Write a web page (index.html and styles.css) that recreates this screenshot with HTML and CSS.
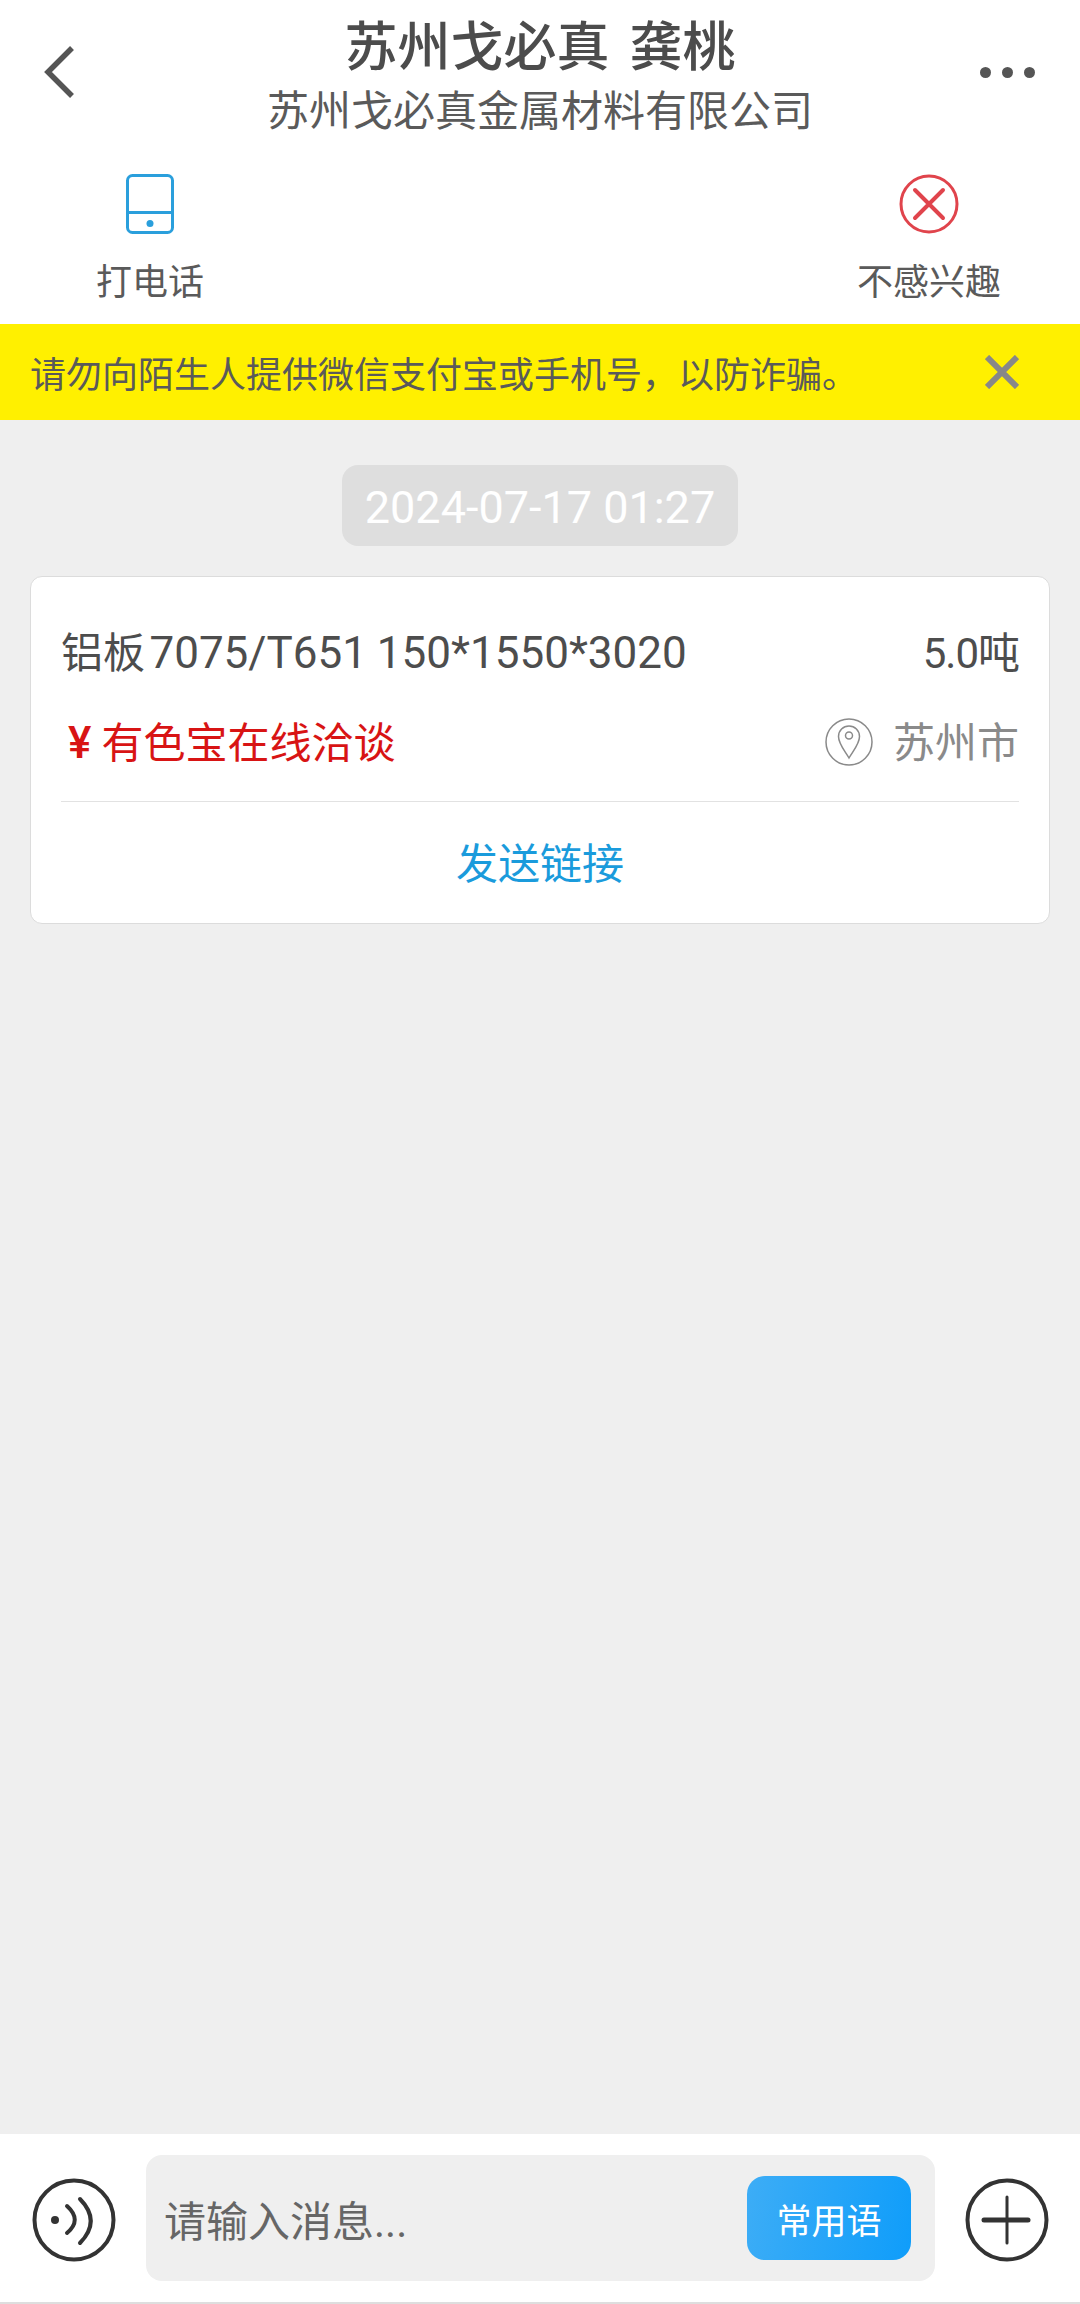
FILE: index.html
```html
<!DOCTYPE html>
<html lang="zh-CN">
<head>
<meta charset="utf-8">
<title>苏州戈必真 龚桃</title>
<link rel="stylesheet" href="styles.css">
</head>
<body>
<div class="page">
  <header class="topbar">
    <svg class="back" viewBox="0 0 36 56" width="36" height="56"><path d="M31 4 L7 28 L31 52" fill="none" stroke="#555" stroke-width="5.500"/></svg>
    <div class="heading">
      <div class="title">苏州戈必真 龚桃</div>
      <div class="subtitle">苏州戈必真金属材料有限公司</div>
    </div>
    <div class="more"><i></i><i></i><i></i></div>
  </header>
  <nav class="actions">
    <div class="action call">
      <svg viewBox="0 0 60 60" width="60" height="60"><rect x="7.500" y="1.500" width="45" height="57" rx="5" fill="none" stroke="#2a9fdc" stroke-width="3"/><path d="M7.500 38.500H52.500" stroke="#2a9fdc" stroke-width="3"/><circle cx="30" cy="49.500" r="3.500" fill="#2a9fdc"/></svg>
      <span>打电话</span>
    </div>
    <div class="action reject">
      <svg viewBox="0 0 60 60" width="60" height="60"><circle cx="30" cy="30" r="28" fill="none" stroke="#e0444c" stroke-width="3"/><path d="M16 16 L44 44 M44 16 L16 44" stroke="#e0444c" stroke-width="4" stroke-linecap="round"/></svg>
      <span>不感兴趣</span>
    </div>
  </nav>
  <div class="notice">
    <span>请勿向陌生人提供微信支付宝或手机号，以防诈骗。</span>
    <svg viewBox="0 0 34 34" width="34" height="34"><path d="M2 2 L32 32 M32 2 L2 32" stroke="#888" stroke-width="6"/></svg>
  </div>
  <main class="messages">
    <div class="time">2024-07-17 01:27</div>
    <section class="card">
      <div class="row">
        <span class="product">铝板 <span class="spec">7075/T651 150*1550*3020</span></span>
        <span class="weight">5.0吨</span>
      </div>
      <div class="row">
        <span class="price"><b>¥</b>有色宝在线洽谈</span>
        <span class="place">
          <svg viewBox="0 0 48 48" width="48" height="48"><circle cx="24" cy="24" r="23" fill="none" stroke="#8a8a8a" stroke-width="1.500"/><path d="M24 40 C20 33 13.500 26 13.500 18.500 A10.500 10.500 0 0 1 34.500 18.500 C34.500 26 28 33 24 40Z" fill="none" stroke="#8a8a8a" stroke-width="1.500"/><circle cx="24" cy="17.500" r="3.500" fill="none" stroke="#8a8a8a" stroke-width="1.500"/></svg>
          <span class="city">苏州市</span>
        </span>
      </div>
      <div class="link">发送链接</div>
    </section>
  </main>
  <footer class="composer">
    <svg viewBox="0 0 84 84" width="84" height="84"><circle cx="42" cy="42" r="39.500" fill="none" stroke="#333" stroke-width="4"/><circle cx="23" cy="42" r="4" fill="#333"/><path d="M35 28 Q50.500 42 35 55 M48 21 Q69.500 43 48 65" fill="none" stroke="#333" stroke-width="4" stroke-linecap="round"/></svg>
    <div class="input">
      <span>请输入消息...</span>
      <button class="phrases">常用语</button>
    </div>
    <svg viewBox="0 0 84 84" width="84" height="84"><circle cx="42" cy="42" r="39.500" fill="none" stroke="#333" stroke-width="4"/><path d="M19 42H63" stroke="#333" stroke-width="5" stroke-linecap="round"/><path d="M42 19V65" stroke="#333" stroke-width="3" stroke-linecap="round"/></svg>
  </footer>
</div>
</body>
</html>
```

FILE: styles.css
```css
* { box-sizing: border-box; }
html, body { margin: 0; padding: 0; }
body {
  font-family: Roboto, "Noto Sans CJK SC", sans-serif;
  color: #444;
}
.page {
  width: 1080px;
  height: 2304px;
  display: flex;
  flex-direction: column;
  background: #efefef;
}
.topbar {
  height: 144px;
  flex: none;
  background: #fff;
  display: grid;
  grid-template-columns: 1fr auto 1fr;
  align-items: center;
  padding: 0 45px 0 41px;
}
.back { display: block; }
.heading { text-align: center; align-self: start; padding-top: 16px; margin-left: 4px; }
.title {
  font-size: 53px;
  line-height: 64px;
  font-weight: 500;
  word-spacing: 7px;
  color: #4c4c4c;
}
.subtitle {
  font-size: 42px;
  line-height: 64px;
  color: #5a5a5a;
}
.more { display: flex; gap: 11px; justify-self: end; }
.more i {
  display: block;
  width: 11px;
  height: 11px;
  border-radius: 50%;
  background: #555;
}
.actions {
  height: 180px;
  flex: none;
  background: #fff;
  display: flex;
  justify-content: space-between;
  padding: 30px 79px 0 96px;
}
.action {
  display: flex;
  flex-direction: column;
  align-items: center;
  font-size: 36px;
  line-height: 50px;
  color: #5a5a5a;
  gap: 24px;
}
.action svg { display: block; }
.notice {
  height: 96px;
  flex: none;
  background: #fff000;
  display: flex;
  align-items: center;
  justify-content: space-between;
  padding: 0 61px 0 30px;
  font-size: 36px;
  color: #5a5a5a;
}
.messages {
  flex: 1;
  padding: 45px 30px 0;
  display: flex;
  flex-direction: column;
  align-items: center;
}
.time {
  width: 396px;
  height: 81px;
  border-radius: 16px;
  background: #dedede;
  color: #fff;
  font-size: 45px;
  line-height: 81px;
  padding-top: 2px;
  text-align: center;
}
.card {
  align-self: stretch;
  margin-top: 30px;
  height: 348px;
  background: #fff;
  border: 1px solid #dcdcdc;
  border-radius: 12px;
  padding: 30px 30px 0;
  display: flex;
  flex-direction: column;
}
.row {
  height: 90px;
  flex: none;
  display: flex;
  align-items: center;
  justify-content: space-between;
  font-size: 42px;
}
.product, .weight, .price, .city { padding-bottom: 6px; }
.product { color: #4d4d4d; word-spacing: -6px; }
.spec { font-size: 44px; word-spacing: -1px; }
.weight { color: #4d4d4d; letter-spacing: -1px; }
.price { color: #d81414; }
.price b { font-weight: 500; margin: 0 10px 0 7px; font-size: 44px; }
.place {
  display: flex;
  align-items: center;
  gap: 20px;
  color: #8a8a8a;
}
.place svg { display: block; }
.link {
  margin-top: 14px;
  border-top: 1px solid #e2e2e2;
  flex: 1;
  display: flex;
  align-items: center;
  justify-content: center;
  font-size: 42px;
  padding-bottom: 4px;
  color: #1a9bdc;
}
.composer {
  height: 170px;
  flex: none;
  background: #fff;
  border-bottom: 2px solid #dedede;
  display: flex;
  align-items: center;
  justify-content: space-between;
  padding: 0 31px 0 32px;
}
.composer svg { display: block; margin-top: 4px; }
.input {
  width: 789px;
  height: 126px;
  background: #efefef;
  border-radius: 16px;
  display: flex;
  align-items: center;
  justify-content: space-between;
  padding: 0 24px 0 18px;
  font-size: 42px;
  color: #666;
}
.phrases {
  width: 164px;
  height: 84px;
  border: 0;
  border-radius: 18px;
  background: linear-gradient(100deg, #3dadf6, #0f9dfa);
  color: #fff;
  font: inherit;
  font-size: 35px;
  padding: 0;
}
```
